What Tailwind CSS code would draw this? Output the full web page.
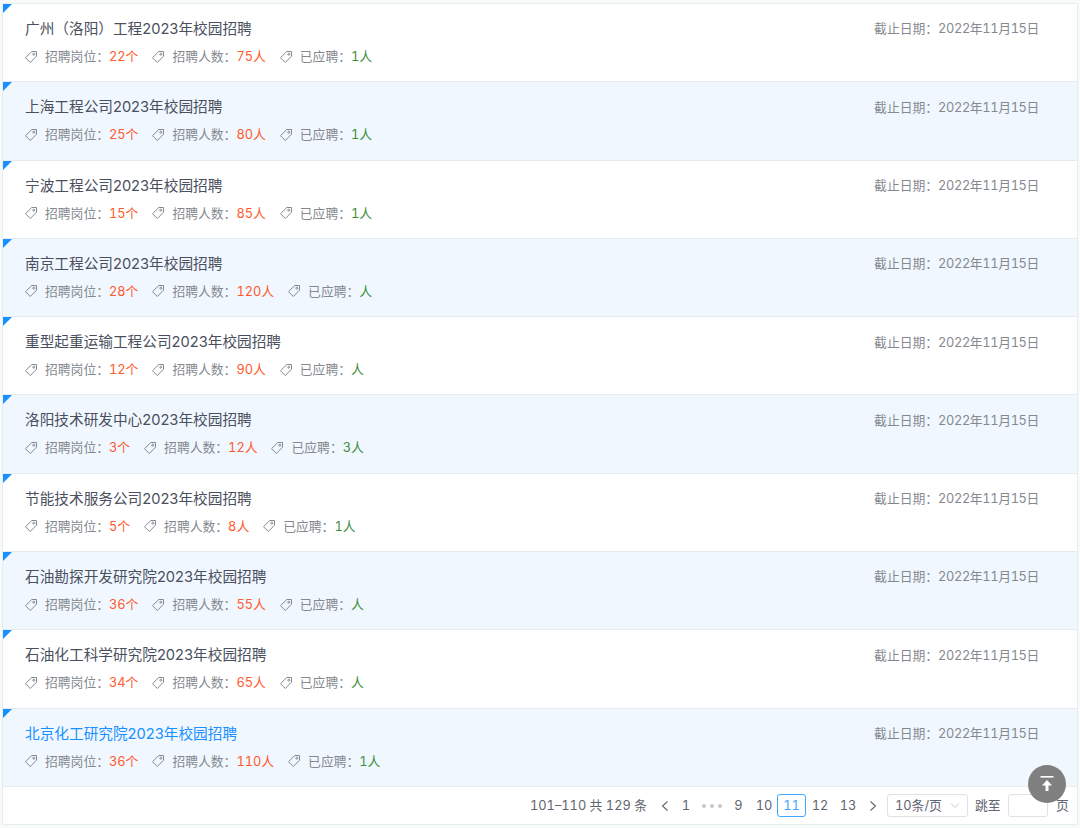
<!DOCTYPE html>
<html lang="zh-CN">
<head>
    <meta charset="UTF-8">
    <title>校园招聘</title>
    <script src="https://cdn.jsdelivr.net/npm/@tailwindcss/browser@4"></script>
</head>
<body class="h-[828px] overflow-hidden bg-[#f8fafa] tabular-nums font-['Inter','Noto_Sans_CJK_SC',sans-serif]">
    <main class="relative ml-[2px] mt-[3px] w-[1076px] h-[822px] border border-[#e3eeee] bg-white">
        <div id="list"></div>

        <div class="flex items-center h-[38px] pl-[527px] text-[12.800px] text-[#5f6570]">
            <span class="w-[131px] whitespace-nowrap">101–110 共 129 条</span>
            <svg class="w-[8px] h-[12px]" viewBox="0 0 8 12" fill="none" stroke="#666" stroke-width="1.100"><path d="M6.500 1.500 1.500 6l5 4.500"/></svg>
            <span class="w-[30px] text-center ml-[2px]">1</span>
            <span class="w-[20px] flex gap-[4px] ml-[1px]">
                <i class="w-[4px] h-[4px] rounded-full bg-[#c4c8cc]"></i><i class="w-[4px] h-[4px] rounded-full bg-[#c4c8cc]"></i><i class="w-[4px] h-[4px] rounded-full bg-[#c4c8cc]"></i>
            </span>
            <span class="w-[33px] text-center">9</span>
            <span class="w-[18px] text-center">10</span>
            <span class="w-[29px] h-[23px] ml-[4px] flex items-center justify-center rounded-[3px] border border-[#40a9ff] text-[#40a9ff]">11</span>
            <span class="w-[28px] text-center">12</span>
            <span class="w-[28px] text-center">13</span>
            <svg class="w-[8px] h-[12px] ml-[7px]" viewBox="0 0 8 12" fill="none" stroke="#666" stroke-width="1.100"><path d="m1.500 1.500 5 4.500-5 4.500"/></svg>
            <span class="w-[81px] h-[23px] ml-[10px] px-[7px] flex items-center justify-between rounded-[3px] border border-[#dfe2e5]">10条/页
                <svg class="w-[10px] h-[6px]" viewBox="0 0 10 6" fill="none" stroke="#c4c8cc"><path d="m1 .5 4 4 4-4"/></svg>
            </span>
            <span class="ml-[7px] w-[33px]">跳至</span>
            <span class="w-[40px] h-[23px] rounded-[3px] border border-[#dfe2e5]"></span>
            <span class="ml-[8px]">页</span>
        </div>

        <div class="absolute left-[1025px] top-[761px] w-[38px] h-[38px] rounded-full bg-[#7f7f7f] flex items-center justify-center">
            <svg class="w-[16px] h-[18px]" viewBox="0 0 16 18" fill="white"><rect x="1.500" y="1" width="13" height="1.600"/><path d="M8 5 13 10.500H9.500V16h-3v-5.500H3z"/></svg>
        </div>
    </main>

    <script>
        const jobs = [
            ['广州（洛阳）工程2023年校园招聘', '22个', '75人', '1人'],
            ['上海工程公司2023年校园招聘', '25个', '80人', '1人'],
            ['宁波工程公司2023年校园招聘', '15个', '85人', '1人'],
            ['南京工程公司2023年校园招聘', '28个', '120人', '人'],
            ['重型起重运输工程公司2023年校园招聘', '12个', '90人', '人'],
            ['洛阳技术研发中心2023年校园招聘', '3个', '12人', '3人'],
            ['节能技术服务公司2023年校园招聘', '5个', '8人', '1人'],
            ['石油勘探开发研究院2023年校园招聘', '36个', '55人', '人'],
            ['石油化工科学研究院2023年校园招聘', '34个', '65人', '人'],
            ['北京化工研究院2023年校园招聘', '36个', '110人', '1人']
        ];

        const tag = '<svg class="w-[14px] h-[14px] -ml-[1px] mr-[7px] shrink-0" viewBox="0 0 14 14" fill="none" stroke="#85898f" stroke-width="1"><path d="M7.800 1.500h4.700v4.700L6.300 12.500 1.500 7.700z" stroke-linejoin="round"/><circle cx="9.800" cy="4.200" r="1"/></svg>';

        function meta(label, value, color) {
            return '<span class="flex items-center mr-[14px]">' + tag +
                '<span class="text-[#85898f]">' + label + '：</span>' +
                '<span class="' + color + '">' + value + '</span></span>';
        }

        document.getElementById('list').innerHTML = jobs.map(function (job, i) {
            const bg = i % 2 ? 'bg-[#f0f7ff]' : 'bg-white';
            const titleColor = i === 9 ? 'text-[#1890ff]' : 'text-[#4a4f5e]';
            return '<div class="relative h-[78.300px] pl-[22px] pr-[38px] pt-[15px] border-b border-[#e6ebf0] ' + bg + '">' +
                '<i class="absolute left-0 top-0 w-0 h-0 border-t-[9px] border-r-[9px] border-t-[#1890ff] border-r-transparent"></i>' +
                '<div class="flex justify-between items-center h-[20px]">' +
                '<span class="normal-nums text-[14.670px] ' + titleColor + '">' + job[0] + '</span>' +
                '<span class="text-[12.800px] text-[#85898f]">截止日期：<span class="tracking-[-0.350px]">2022年11月15日</span></span></div>' +
                '<div class="flex items-center h-[20px] mt-[7.500px] text-[12.800px]">' +
                meta('招聘岗位', job[1], 'text-[#ff5a2d]') +
                meta('招聘人数', job[2], 'text-[#ff5a2d]') +
                meta('已应聘', job[3], 'text-[#3f8f3f]') +
                '</div></div>';
        }).join('');
    </script>
</body>
</html>
